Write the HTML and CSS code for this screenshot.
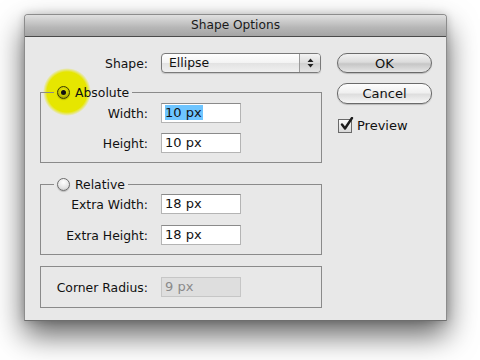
FILE: index.html
```html
<!DOCTYPE html>
<html lang="en">
	<head>
		<meta charset="UTF-8" />
		<title>Shape Options</title>
		<link rel="stylesheet" href="styles.css">
	</head>
	<body>
		<div class="window">
			<div class="titlebar">Shape Options</div>
			<div class="content">
				<div class="main">
					<div class="row">
						<span class="label">Shape:</span>
						<div class="popup">
							<span class="popup-text">Ellipse</span>
							<span class="stepper">
								<svg width="7" height="10" viewBox="0 0 7 10"><path d="M3.5 0.5L6.5 4H0.5Z M3.5 9.5L6.5 6H0.5Z" fill="#222"/></svg>
							</span>
						</div>
					</div>

					<fieldset class="group first">
						<legend><span class="radio on"></span>Absolute</legend>
						<div class="row">
							<span class="label">Width:</span>
							<span class="field"><span class="selected">10 px</span></span>
						</div>
						<div class="row">
							<span class="label">Height:</span>
							<span class="field">10 px</span>
						</div>
					</fieldset>

					<fieldset class="group second">
						<legend><span class="radio"></span>Relative</legend>
						<div class="row">
							<span class="label">Extra Width:</span>
							<span class="field">18 px</span>
						</div>
						<div class="row">
							<span class="label">Extra Height:</span>
							<span class="field">18 px</span>
						</div>
					</fieldset>

					<div class="group plain">
						<div class="row">
							<span class="label">Corner Radius:</span>
							<span class="field disabled">9 px</span>
						</div>
					</div>
				</div>

				<div class="side">
					<button class="btn default">OK</button>
					<button class="btn">Cancel</button>
					<label class="check">
						<span class="box">
							<svg width="15" height="15" viewBox="0 0 15 15"><path d="M3 7.5L6 11.5L13 1" fill="none" stroke="#1c1c1c" stroke-width="2.4" stroke-linecap="round" stroke-linejoin="round"/></svg>
						</span>
						Preview
					</label>
				</div>
			</div>
			<div class="highlight"></div>
		</div>
	</body>
</html>
```

FILE: styles.css
```css
body {
	margin: 0;
	padding: 14px 0 40px 24px;
	background: #fff;
	font-family: "DejaVu Sans", sans-serif;
	font-size: 12.4px;
	color: #111;
}
.window {
	position: relative;
	z-index: 0;
	width: 421px;
	height: 305px;
	background: #e8e8e8;
	border: 1px solid #8c8c8c;
	border-bottom-color: #6e6e6e;
	border-radius: 4px 4px 0 0;
	box-shadow: 0 14px 30px rgba(0, 0, 0, 0.62), 0 0 8px rgba(0, 0, 0, 0.18);
}
.titlebar {
	height: 21px;
	line-height: 21px;
	text-align: center;
	font-size: 12.2px;
	color: #1a1a1a;
	background: linear-gradient(#e0e0e0, #b6b6b6 60%, #a4a4a4);
	border-bottom: 1px solid #4a4a4a;
	border-radius: 3px 3px 0 0;
}
.content {
	display: flex;
	gap: 15px;
	padding: 16px 14px 0 15px;
}
.main {
	width: 282px;
}
.row {
	display: flex;
	align-items: center;
	height: 20px;
}
.label {
	width: 108px;
	text-align: right;
	margin-right: 13px;
}
.popup {
	display: flex;
	width: 158px;
	height: 18px;
	border: 1px solid #7a7a7a;
	border-radius: 4px;
	background: linear-gradient(#ffffff, #f3f3f3 50%, #e2e2e2 51%, #f0f0f0);
	box-shadow: 0 1px 1px rgba(0, 0, 0, 0.15);
}
.popup-text {
	flex: 1;
	padding-left: 7px;
	line-height: 18px;
}
.stepper {
	display: flex;
	align-items: center;
	justify-content: center;
	width: 20px;
	border-left: 1px solid #9a9a9a;
	border-radius: 0 3px 3px 0;
	background: linear-gradient(#f4f4f4, #dcdcdc 50%, #cfcfcf 51%, #e4e4e4);
}
.group {
	margin: 0;
	padding: 0 0 9px;
	border: 1px solid #8a8a8a;
	min-width: 0;
}
.group.first {
	margin-top: 11px;
	padding-top: 3px;
}
.group.second {
	margin-top: 13px;
	padding-top: 2px;
}
.group .row + .row {
	margin-top: 10px;
}
.group.second .row + .row {
	margin-top: 11px;
}
.group .label {
	width: 107px;
}
.group.plain {
	margin-top: 11px;
	padding: 10px 0 10px;
}
legend {
	display: flex;
	align-items: center;
	gap: 5px;
	margin-left: 13px;
	padding: 0 3px;
	height: 16px;
}
.radio {
	width: 11px;
	height: 11px;
	border: 1px solid #6c6c6c;
	border-radius: 50%;
	background: radial-gradient(circle at 50% 30%, #ffffff, #e4e4e4 60%, #bdbdbd);
	box-shadow: 0 1px 1px rgba(0, 0, 0, 0.2);
	display: flex;
	align-items: center;
	justify-content: center;
}
.radio.on {
	border-color: #3a3a00;
	background: radial-gradient(circle at 50% 35%, #f2f200, #c4c400 55%, #7c7c00);
}
.radio.on::after {
	content: "";
	width: 5px;
	height: 5px;
	border-radius: 50%;
	background: #111;
}
.field {
	box-sizing: border-box;
	width: 80px;
	height: 20px;
	padding: 0 3px;
	line-height: 18px;
	font-size: 13px;
	background: #fff;
	border: 1px solid #b4b4b4;
	border-top-color: #8a8a8a;
}
.selected {
	background: #6ec5ff;
	padding-right: 1px;
}
.field.disabled {
	background: #dedede;
	border-color: #c6c6c6;
	color: #8a8a8a;
}
.side {
	display: flex;
	flex-direction: column;
	align-items: flex-start;
	gap: 10px;
	width: 95px;
}
.btn {
	width: 95px;
	height: 20px;
	padding: 0;
	font-family: inherit;
	font-size: 13px;
	color: #111;
	border: 1px solid #6a6a6a;
	border-radius: 10px;
	background: linear-gradient(#fdfdfd, #f0f0f0 45%, #dedede 55%, #f6f6f6);
	box-shadow: 0 1px 1px rgba(0, 0, 0, 0.2);
}
.btn.default {
	background: linear-gradient(#f2f2f2, #dcdcdc 45%, #c6c6c6 55%, #e6e6e6);
}
.btn + .btn {
	height: 21px;
}
.check {
	display: flex;
	align-items: center;
	gap: 5px;
	margin: 4px 0 0 1px;
	font-size: 13px;
}
.box {
	position: relative;
	width: 12px;
	height: 12px;
	border: 1px solid #6a6a6a;
	background: linear-gradient(#fbfbfb, #d8d8d8);
}
.box svg {
	position: absolute;
	left: 0;
	top: -3px;
}
.highlight {
	position: absolute;
	z-index: -1;
	left: 18px;
	top: 53px;
	width: 48px;
	height: 48px;
	border-radius: 50%;
	background: radial-gradient(circle, #e6e600 20px, rgba(230, 230, 0, 0) 24px);
	pointer-events: none;
}
```
